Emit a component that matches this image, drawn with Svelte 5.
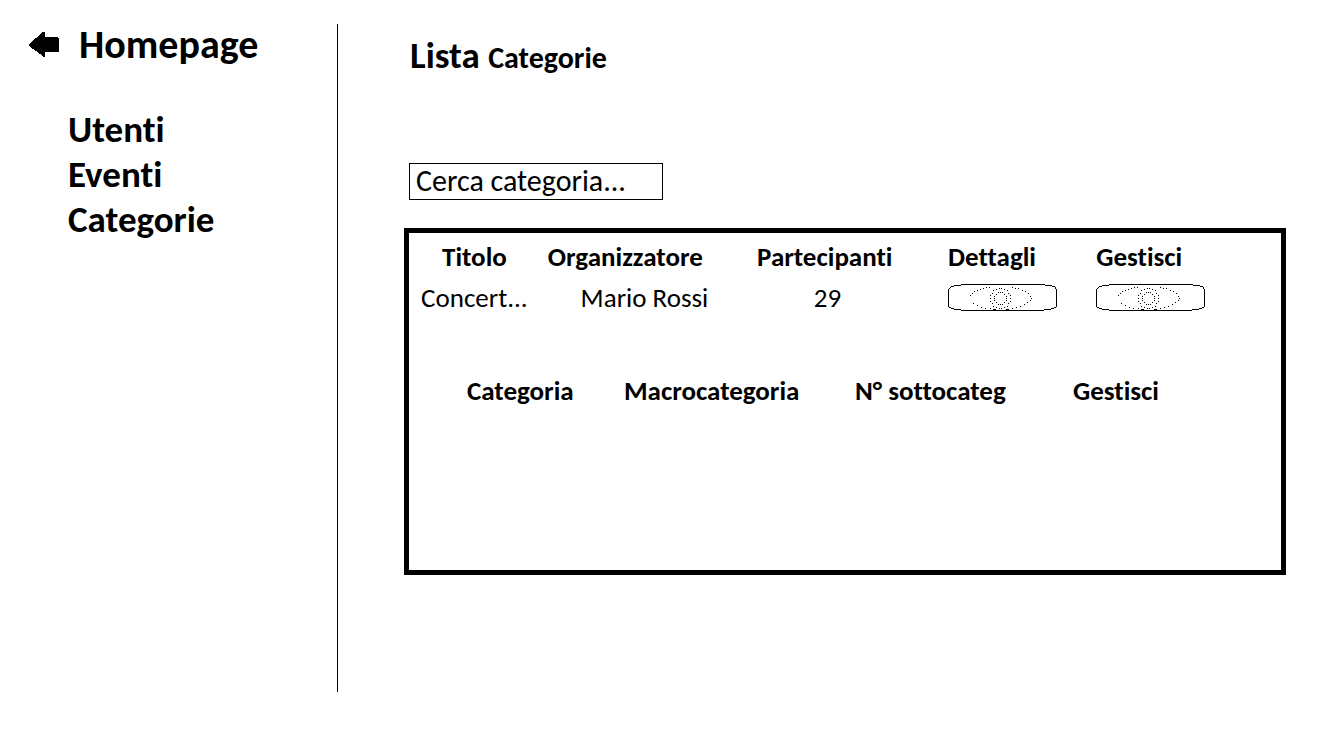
<script>
  const links = ['Utenti', 'Eventi', 'Categorie'];
  const events = [{ title: 'Concert...', organizer: 'Mario Rossi', people: 29 }];
  let query = $state('');

  // Dotted ring: n single-pixel dots around (cx, cy)
  function ring(cx, cy, r, n) {
    return Array.from({ length: n }, (_, i) => {
      const a = (i / n) * Math.PI * 2;
      return [Math.round(cx + r * Math.cos(a)), Math.round(cy + r * Math.sin(a))];
    });
  }

  const lids = [
    [22, 11], [24, 9], [26, 7], [29, 6], [32, 5], [35, 4], [38, 3], [41, 3],
    [64, 3], [67, 4], [70, 4], [74, 6], [77, 7], [80, 9], [82, 12], [83, 14],
    [82, 16], [79, 18], [76, 20], [72, 22], [68, 23], [64, 24],
    [25, 19], [29, 21], [33, 23], [37, 24], [42, 24]
  ];
  const dots = [...lids, ...ring(52, 14, 10, 22), ...ring(52, 14, 6, 16)];
  const dotPath = dots.map(([x, y]) => `M${x} ${y}h1v1h-1z`).join('');
</script>

{#snippet eye(label)}
  <button class="eye" type="button" aria-label={label}>
    <svg width="110" height="28" viewBox="0 0 110 28" fill="none" stroke="#000" shape-rendering="crispEdges" aria-hidden="true">
      <path d="M13 .5H97M6 1.5H13M97 1.5H104M3 2.5H6M104 2.5H107M2 3.5H3M107 3.5H108M1 4.5H2M107 4.5H108M.5 5V23M108.5 5V23M1 23.5H3M106 23.5H108M3 24.5H6M103 24.5H106M6 25.5H13M96 25.5H103M13 26.5H96M45 25.5H48M58 25.5H61" />
      <path d={dotPath} fill="#000" stroke="none" />
    </svg>
  </button>
{/snippet}

<div class="page">
  <nav>
    <a class="home" href="#home">
      <svg width="31" height="26" viewBox="0 0 31 26" shape-rendering="crispEdges" aria-hidden="true">
        <path d="M0 12 14 0h2v5h13v1h1v14H16v5h-2v-1L0 14z" />
      </svg>
      Homepage
    </a>
    <ul>
      {#each links as link}
        <li><a href="#{link}">{link}</a></li>
      {/each}
    </ul>
  </nav>

  <main>
    <h1>Lista <span>Categorie</span></h1>
    <input type="text" aria-label="Cerca categoria" placeholder="Cerca categoria..." bind:value={query} />

    <section>
      <table class="events">
        <colgroup><col class="e1" /><col class="e2" /><col class="e3" /><col class="e4" /><col /></colgroup>
        <thead>
          <tr>
            <th class="mid">Titolo</th>
            <th>Organizzatore</th>
            <th>Partecipanti</th>
            <th class="act">Dettagli</th>
            <th class="act">Gestisci</th>
          </tr>
        </thead>
        <tbody>
          {#each events as event}
            <tr>
              <td class="mid">{event.title}</td>
              <td class="mid">{event.organizer}</td>
              <td class="mid">{event.people}</td>
              <td class="act">{@render eye('Dettagli')}</td>
              <td class="act">{@render eye('Gestisci')}</td>
            </tr>
          {/each}
        </tbody>
      </table>

      <table class="categories">
        <colgroup><col class="c1" /><col class="c2" /><col class="c3" /><col /></colgroup>
        <thead>
          <tr>
            <th>Categoria</th>
            <th>Macrocategoria</th>
            <th>N° sottocateg</th>
            <th>Gestisci</th>
          </tr>
        </thead>
      </table>
    </section>
  </main>
</div>

<style>
  :global(body) {
    background: #fff;
    color: #000;
    font-family: Carlito, Lato, sans-serif;
    font-variant-ligatures: none;
  }
  .page {
    display: grid;
    grid-template-columns: 338px 1fr;
    padding: 24px 0 40px;
  }
  nav {
    box-sizing: border-box;
    min-height: 668px;
    border-right: 1px solid #000;
  }
  a {
    color: inherit;
    text-decoration: none;
    font-weight: 700;
  }
  .home {
    display: flex;
    align-items: center;
    gap: 19px;
    padding-left: 29px;
    font-size: 40px;
    line-height: 41px;
  }
  ul {
    list-style: none;
    margin: 42px 0 0;
    padding: 0 0 0 68px;
    font-size: 37px;
    line-height: 45px;
  }
  main {
    padding: 11px 50px 0 66px;
  }
  h1 {
    margin: 0 0 0 6px;
    font-size: 37px;
    line-height: 42px;
  }
  h1 span {
    font-size: 30px;
  }
  input {
    display: block;
    box-sizing: border-box;
    width: 254px;
    height: 37px;
    margin: 84px 0 28px 5px;
    padding: 0 6px 2px;
    border: 1px solid #000;
    border-radius: 0;
    background: #fff;
    color: #000;
    font: 30px Carlito, Lato, sans-serif;
  }
  input::placeholder {
    color: #000;
    opacity: 1;
  }
  section {
    box-sizing: border-box;
    min-height: 347px;
    padding-top: 3px;
    border: 5px solid #000;
  }
  table {
    width: 100%;
    table-layout: fixed;
    border-collapse: collapse;
    font-size: 27px;
    line-height: 41px;
  }
  th,
  td {
    padding: 0 0 0 8px;
    text-align: left;
    white-space: nowrap;
  }
  .mid {
    padding: 0;
    text-align: center;
  }
  .act {
    padding-left: 42px;
  }
  .e1 { width: 15%; }
  .e2 { width: 24%; }
  .e3 { width: 18%; }
  .e4 { width: 17%; }
  .categories {
    margin-top: 52px;
  }
  .categories th {
    padding-left: 58px;
  }
  .c1 { width: 18%; }
  .c2 { width: 26.5%; }
  .c3 { width: 25%; }
  .eye {
    display: block;
    padding: 0;
    border: 0;
    background: none;
    cursor: pointer;
  }
  .eye svg {
    display: block;
  }
</style>
